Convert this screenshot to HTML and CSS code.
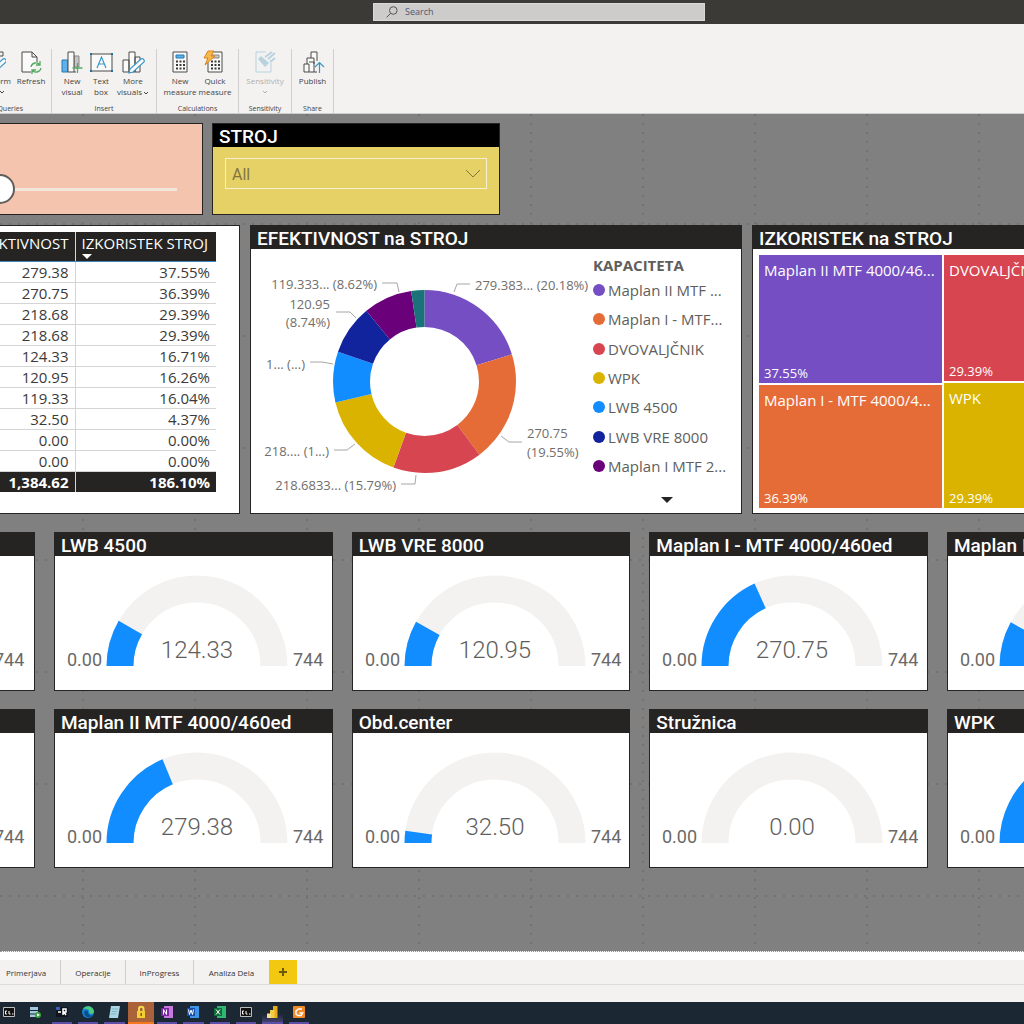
FILE: index.html
```html
<!DOCTYPE html>
<html lang="sl">
<head>
<meta charset="utf-8">
<meta name="viewport" content="width=device-width, initial-scale=1">
<title>Efektivnost strojev</title>
<link rel="stylesheet" href="styles.css">
</head>
<body>
<header class="titlebar">
  <label class="search">
    <svg class="search-icon" viewBox="0 0 12 12" aria-hidden="true"><circle cx="7.3" cy="4.5" r="3.8"/><path d="M4.6 7.3 .6 11.4"/></svg>
    <input type="search" placeholder="Search" aria-label="Search">
  </label>
</header>

<nav class="ribbon" aria-label="Ribbon">
  <section class="group group-queries">
    <div class="tools">
      <button class="tool tool-transform" type="button">
        <svg class="icon" viewBox="0 0 24 24" aria-hidden="true"><path class="ink" d="M1 2h20v4M1 6h20M1 2v18h12M1 12h8"/><path class="blue-line paper" d="M21 9 10 19l-1 4 4-1L24 12c1-2-1-4-3-3z"/></svg>
        <span>Transform</span><svg class="caret" viewBox="0 0 6 4" aria-hidden="true"><path d="m1 1 2 2 2-2"/></svg>
      </button>
      <button class="tool tool-refresh" type="button">
        <svg class="icon" viewBox="0 0 24 24" aria-hidden="true"><path class="ink paper" d="M12 22H3V2h10l5 5v5M13 2v5h5"/><path class="green-line" d="M12 17a5 5 0 0 1 9-2M21 11v4h-4M22 18a5 5 0 0 1-9 2M13 24v-4h4"/></svg>
        <span>Refresh</span>
      </button>
    </div>
    <h2 class="group-name">Queries</h2>
  </section>
  <section class="group group-insert">
    <div class="tools">
      <button class="tool" type="button">
        <svg class="icon" viewBox="0 0 24 24" aria-hidden="true"><path class="blue-fill" d="M2 10h6v12H2z"/><path class="grey-fill" d="M14 6h5v11h-5z"/><path class="ink paper" d="M8 2h6v20H8z"/><path class="ink" d="M14 22h2"/><path class="green-line" d="M17.500 13v10M12.500 18h10"/></svg>
        <span>New<br>visual</span>
      </button>
      <button class="tool" type="button">
        <svg class="icon" viewBox="0 0 24 24" aria-hidden="true"><path class="ink paper" d="M2 4h21v17H2z"/><path class="blue-line" d="m8 18 4.500-11L17 18M9.500 14h6"/><path class="corner" d="M1 3h2v2H1zM22 3h2v2h-2zM1 20h2v2H1zM22 20h2v2h-2z"/></svg>
        <span>Text<br>box</span>
      </button>
      <button class="tool tool-wide" type="button">
        <svg class="icon" viewBox="0 0 24 24" aria-hidden="true"><path class="ink paper" d="M2 10h6v12H2zM8 2h6v20H8zM14 7h5v15h-5z"/><path class="blue-line paper" d="M20 9 9 19l-1 4 4-1L23 12c1-2-1-4-3-3z"/></svg>
        <span>More<br>visuals<svg class="caret-inline" viewBox="0 0 6 4" aria-hidden="true"><path d="m1 1 2 2 2-2"/></svg></span>
      </button>
    </div>
    <h2 class="group-name">Insert</h2>
  </section>
  <section class="group group-calc">
    <div class="tools">
      <button class="tool tool-wide" type="button">
        <svg class="icon" viewBox="0 0 24 24" aria-hidden="true"><path class="ink paper" d="M5 2h14v20H5z"/><path class="blue-fill" d="M8 5h8v3H8z"/><path class="keys" d="M8 11.500h9M8 15h9M8 18.500h9"/></svg>
        <span>New<br>measure</span>
      </button>
      <button class="tool tool-wide" type="button">
        <svg class="icon" viewBox="0 0 24 24" aria-hidden="true"><path class="ink paper" d="M5 2h14v20H5z"/><path class="grey-fill" d="M9 5h7v3H9z"/><path class="keys" d="M8 11.500h9M8 15h9M8 18.500h9"/><path class="bolt" d="M5 1h6L8 6h4L2 15l3-7H1z"/></svg>
        <span>Quick<br>measure</span>
      </button>
    </div>
    <h2 class="group-name">Calculations</h2>
  </section>
  <section class="group group-sens">
    <div class="tools">
      <button class="tool tool-sens" type="button" disabled>
        <svg class="icon" viewBox="0 0 24 24" aria-hidden="true"><path class="pale" d="M13 2H3v20h15v-9"/><path class="pale-fill" d="m5 9 3-3 8 7-4 4z"/><path class="pale thick" d="m12 7 7-5M15 9l7-6M17 12l5-4"/></svg>
        <span>Sensitivity</span><svg class="caret" viewBox="0 0 6 4" aria-hidden="true"><path d="m1 1 2 2 2-2"/></svg>
      </button>
    </div>
    <h2 class="group-name">Sensitivity</h2>
  </section>
  <section class="group group-share">
    <div class="tools">
      <button class="tool tool-wide" type="button">
        <svg class="icon" viewBox="0 0 24 24" aria-hidden="true"><path class="ink paper" d="M10 8V2h6v9M6 14V8h7v6M3 14h5v8H3zM8 12h5v10H8"/><path class="ink" d="M13 22h3"/><path class="blue-line" d="M18.500 23V13M14 17l4.500-4.500L23 17"/></svg>
        <span>Publish</span>
      </button>
    </div>
    <h2 class="group-name">Share</h2>
  </section>
</nav>

<main class="canvas">
  <div class="row row-filters">
    <section class="card slider-card">
      <input class="range" type="range" min="0" max="1000" value="477" aria-label="Obdobje">
    </section>
    <section class="card filter-card">
      <h2 class="card-title"><label for="stroj">STROJ</label></h2>
      <div class="select-wrap">
        <select id="stroj"><option>All</option></select>
        <svg class="select-caret" viewBox="0 0 16 10" aria-hidden="true"><path d="m1 1 7 7 7-7"/></svg>
      </div>
    </section>
  </div>

  <div class="row row-charts">
    <section class="card table-card">
      <table>
        <thead><tr><th scope="col">EFEKTIVNOST</th><th scope="col" class="sorted">IZKORISTEK STROJ</th></tr></thead>
        <tbody>
          <tr><td>279.38</td><td>37.55%</td></tr>
          <tr><td>270.75</td><td>36.39%</td></tr>
          <tr><td>218.68</td><td>29.39%</td></tr>
          <tr><td>218.68</td><td>29.39%</td></tr>
          <tr><td>124.33</td><td>16.71%</td></tr>
          <tr><td>120.95</td><td>16.26%</td></tr>
          <tr><td>119.33</td><td>16.04%</td></tr>
          <tr><td>32.50</td><td>4.37%</td></tr>
          <tr><td>0.00</td><td>0.00%</td></tr>
          <tr><td>0.00</td><td>0.00%</td></tr>
        </tbody>
        <tfoot><tr><td>1,384.62</td><td>186.10%</td></tr></tfoot>
      </table>
    </section>

    <section class="card">
      <h2 class="card-title">EFEKTIVNOST na STROJ</h2>
      <div class="donut-body">
        <svg class="donut" viewBox="0 0 342 264" role="img" aria-label="EFEKTIVNOST na STROJ">
          <g class="ring" transform="rotate(-90 173.500 132.500)">
            <circle class="s1" cx="173.500" cy="132.500" r="73" pathLength="1384.6" stroke-dasharray="279.38 1384.6"/>
            <circle class="s2" cx="173.500" cy="132.500" r="73" pathLength="1384.6" stroke-dasharray="270.75 1384.6" stroke-dashoffset="-279.38"/>
            <circle class="s3" cx="173.500" cy="132.500" r="73" pathLength="1384.6" stroke-dasharray="218.68 1384.6" stroke-dashoffset="-550.13"/>
            <circle class="s4" cx="173.500" cy="132.500" r="73" pathLength="1384.6" stroke-dasharray="218.68 1384.6" stroke-dashoffset="-768.81"/>
            <circle class="s5" cx="173.500" cy="132.500" r="73" pathLength="1384.6" stroke-dasharray="124.33 1384.6" stroke-dashoffset="-987.49"/>
            <circle class="s6" cx="173.500" cy="132.500" r="73" pathLength="1384.6" stroke-dasharray="120.95 1384.6" stroke-dashoffset="-1111.82"/>
            <circle class="s7" cx="173.500" cy="132.500" r="73" pathLength="1384.6" stroke-dasharray="119.33 1384.6" stroke-dashoffset="-1232.77"/>
            <circle class="s8" cx="173.500" cy="132.500" r="73" pathLength="1384.6" stroke-dasharray="32.5 1384.6" stroke-dashoffset="-1352.1"/>
          </g>
          <path class="leader" d="M131 34h15l2 9M85 63h14l6 6M59 113h12l11 2M83 201h13l8-6M150 235h14l1-9M203 43l3-8h13M250 187l8 6h13"/>
          <g class="note">
            <text x="224" y="41">279.383... (20.18%)</text>
            <text x="276" y="189">270.75</text><text x="276" y="208">(19.55%)</text>
            <g text-anchor="end">
              <text x="126" y="40">119.333... (8.62%)</text>
              <text x="79" y="60">120.95</text><text x="79" y="78">(8.74%)</text>
              <text x="54" y="120">1... (...)</text>
              <text x="78" y="207">218.... (1...)</text>
              <text x="145" y="241">218.6833... (15.79%)</text>
            </g>
          </g>
        </svg>
        <div class="legend">
          <h3>KAPACITETA</h3>
          <ul>
            <li class="c1">Maplan II MTF ...</li>
            <li class="c2">Maplan I - MTF...</li>
            <li class="c3">DVOVALJČNIK</li>
            <li class="c4">WPK</li>
            <li class="c5">LWB 4500</li>
            <li class="c6">LWB VRE 8000</li>
            <li class="c7">Maplan I MTF 2...</li>
          </ul>
          <button class="legend-more" type="button" aria-label="More"></button>
        </div>
      </div>
    </section>

    <section class="card cut-right">
      <h2 class="card-title">IZKORISTEK na STROJ</h2>
      <div class="treemap">
        <div class="tree-col">
          <div class="tile t1"><span>Maplan II MTF 4000/46...</span><b>37.55%</b></div>
          <div class="tile t2"><span>Maplan I - MTF 4000/4...</span><b>36.39%</b></div>
        </div>
        <div class="tree-col">
          <div class="tile t3"><span>DVOVALJČNIK</span><b>29.39%</b></div>
          <div class="tile t4"><span>WPK</span><b>29.39%</b></div>
        </div>
      </div>
    </section>
  </div>

  <div class="row row-gauges">
    <section class="card cut-left"><h2 class="card-title">&nbsp;</h2>
      <svg class="gauge" viewBox="0 0 276 134"><path class="track" d="M65 110a77 77 0 0 1 154 0"/><text class="limit" x="236" y="110">744</text></svg></section>
    <section class="card"><h2 class="card-title">LWB 4500</h2>
      <svg class="gauge" viewBox="0 0 276 134"><path class="track" d="M65 110a77 77 0 0 1 154 0"/><path class="fill" pathLength="744" stroke-dasharray="124.33 1488" d="M65 110a77 77 0 0 1 154 0"/><text class="limit" x="12" y="110">0.00</text><text class="value" x="142" y="102">124.33</text><text class="limit" x="238" y="110">744</text></svg></section>
    <section class="card"><h2 class="card-title">LWB VRE 8000</h2>
      <svg class="gauge" viewBox="0 0 276 134"><path class="track" d="M65 110a77 77 0 0 1 154 0"/><path class="fill" pathLength="744" stroke-dasharray="120.95 1488" d="M65 110a77 77 0 0 1 154 0"/><text class="limit" x="12" y="110">0.00</text><text class="value" x="142" y="102">120.95</text><text class="limit" x="238" y="110">744</text></svg></section>
    <section class="card"><h2 class="card-title">Maplan I - MTF 4000/460ed</h2>
      <svg class="gauge" viewBox="0 0 276 134"><path class="track" d="M65 110a77 77 0 0 1 154 0"/><path class="fill" pathLength="744" stroke-dasharray="270.75 1488" d="M65 110a77 77 0 0 1 154 0"/><text class="limit" x="12" y="110">0.00</text><text class="value" x="142" y="102">270.75</text><text class="limit" x="238" y="110">744</text></svg></section>
    <section class="card cut-right"><h2 class="card-title">Maplan I MTF 2000</h2>
      <svg class="gauge" viewBox="0 0 276 134"><path class="track" d="M65 110a77 77 0 0 1 154 0"/><path class="fill" pathLength="744" stroke-dasharray="119.33 1488" d="M65 110a77 77 0 0 1 154 0"/><text class="limit" x="12" y="110">0.00</text></svg></section>
  </div>

  <div class="row row-gauges">
    <section class="card cut-left"><h2 class="card-title">&nbsp;</h2>
      <svg class="gauge" viewBox="0 0 276 134"><path class="track" d="M65 110a77 77 0 0 1 154 0"/><text class="limit" x="236" y="110">744</text></svg></section>
    <section class="card"><h2 class="card-title">Maplan II MTF 4000/460ed</h2>
      <svg class="gauge" viewBox="0 0 276 134"><path class="track" d="M65 110a77 77 0 0 1 154 0"/><path class="fill" pathLength="744" stroke-dasharray="279.38 1488" d="M65 110a77 77 0 0 1 154 0"/><text class="limit" x="12" y="110">0.00</text><text class="value" x="142" y="102">279.38</text><text class="limit" x="238" y="110">744</text></svg></section>
    <section class="card"><h2 class="card-title">Obd.center</h2>
      <svg class="gauge" viewBox="0 0 276 134"><path class="track" d="M65 110a77 77 0 0 1 154 0"/><path class="fill" pathLength="744" stroke-dasharray="32.5 1488" d="M65 110a77 77 0 0 1 154 0"/><text class="limit" x="12" y="110">0.00</text><text class="value" x="142" y="102">32.50</text><text class="limit" x="238" y="110">744</text></svg></section>
    <section class="card"><h2 class="card-title">Stružnica</h2>
      <svg class="gauge" viewBox="0 0 276 134"><path class="track" d="M65 110a77 77 0 0 1 154 0"/><text class="limit" x="12" y="110">0.00</text><text class="value" x="142" y="102">0.00</text><text class="limit" x="238" y="110">744</text></svg></section>
    <section class="card cut-right"><h2 class="card-title">WPK</h2>
      <svg class="gauge" viewBox="0 0 276 134"><path class="track" d="M65 110a77 77 0 0 1 154 0"/><path class="fill" pathLength="744" stroke-dasharray="218.68 1488" d="M65 110a77 77 0 0 1 154 0"/><text class="limit" x="12" y="110">0.00</text></svg></section>
  </div>
</main>

<nav class="pages" aria-label="Pages">
  <button class="page page-first" type="button">Primerjava</button>
  <button class="page" type="button">Operacije</button>
  <button class="page page-mid" type="button">InProgress</button>
  <button class="page page-last" type="button">Analiza Dela</button>
  <button class="page-add" type="button" aria-label="New page"><svg viewBox="0 0 10 10" aria-hidden="true"><path d="M5 1v8M1 5h8"/></svg></button>
</nav>
<div class="status"></div>

<footer class="taskbar">
  <div class="apps">
    <button class="app" type="button" aria-label="Command Prompt"><svg viewBox="0 0 14 14" aria-hidden="true"><path fill="#111" stroke="#bbb" d="M1.500 2.500h11v9h-11z"/><path class="glyph" d="M5 6H3.500v3H5M7 6v3h1.500M10 9h1.500"/></svg></button>
    <button class="app" type="button" aria-label="SQL Server"><svg viewBox="0 0 14 14" aria-hidden="true"><path fill="#9fc9dc" d="M2 2h8v3H2zM2 6h8v2.500H2zM2 9.500h6V12H2z"/><circle cx="10" cy="10" r="3" fill="#3f9e3d"/><path fill="#fff" d="m9 8.500 3 1.500-3 1.500z"/></svg></button>
    <button class="app open" type="button" aria-label="Remote"><svg viewBox="0 0 14 14" aria-hidden="true"><path fill="#10141f" d="M1 2h12v10H1z"/><path fill="none" stroke="#fff" stroke-width="1.500" d="M3 7h3M8 10V4h3v3H8m1 0 2 3"/><path fill="#3a5fb5" d="M1 2h4v3H1z"/></svg></button>
    <button class="app open" type="button" aria-label="Edge"><svg viewBox="0 0 14 14" aria-hidden="true"><circle cx="7" cy="7" r="6" fill="#1687d2"/><path fill="#4ccb7b" d="M2 4c3-5 11-3 11 3-1 3-5 2-5 0 1-3-3-4-6-3z"/><path fill="#0b4e94" d="M3 7c1-2 4-2 4 0 0 3 3 4 5 3-2 4-9 3-9-3z"/></svg></button>
    <button class="app open" type="button" aria-label="Notepad"><svg viewBox="0 0 14 14" aria-hidden="true"><path fill="#a9d6e2" d="M4 1h9l-2 12H2z"/><path fill="none" stroke="#7fb3c4" d="M5 4h6M5 6.500h5M4 9h5"/></svg></button>
    <button class="app active" type="button" aria-label="KeePass"><svg viewBox="0 0 14 14" aria-hidden="true"><path fill="none" stroke="#f3dc53" stroke-width="2" d="M5 6V4a2.200 2.200 0 0 1 4.500 0v2"/><path fill="#f2cf32" d="M3 6h8v7H3z"/><path fill="#8a5a10" d="M6.500 8h1.500v3H6.500z"/></svg></button>
    <button class="app open" type="button" aria-label="OneNote"><svg viewBox="0 0 14 14" aria-hidden="true"><path fill="#c978e0" d="M4 1h9v12H4z"/><path fill="#7c27a3" d="M1 3h8v8H1z"/><path class="glyph" d="M3.500 9.500v-5l3 5v-5"/></svg></button>
    <button class="app open" type="button" aria-label="Word"><svg viewBox="0 0 14 14" aria-hidden="true"><path fill="#3d93e6" d="M4 1h9v12H4z"/><path fill="#174fa8" d="M1 3h8v8H1z"/><path class="glyph" d="m2.500 4.500 1 5L5 5l1.500 4.500 1-5"/></svg></button>
    <button class="app open" type="button" aria-label="Excel"><svg viewBox="0 0 14 14" aria-hidden="true"><path fill="#2fb673" d="M4 1h9v12H4z"/><path fill="#0f6b39" d="M1 3h8v8H1z"/><path class="glyph" d="m3 4.500 4 5m0-5-4 5"/></svg></button>
    <button class="app open" type="button" aria-label="Command Prompt"><svg viewBox="0 0 14 14" aria-hidden="true"><path fill="#111" stroke="#bbb" d="M1.500 2.500h11v9h-11z"/><path class="glyph" d="M5 6H3.500v3H5M7 6v3h1.500M10 9h1.500"/></svg></button>
    <button class="app open current" type="button" aria-label="Power BI"><svg viewBox="0 0 14 14" aria-hidden="true"><path fill="#e7ad18" d="M8 1h4.500v12H8z"/><path fill="#f4cb45" d="M5 5h4.500v8H5z"/><path fill="#f9e08a" d="M2 8.500h4V13H2z"/></svg></button>
    <button class="app open" type="button" aria-label="Snagit"><svg viewBox="0 0 14 14" aria-hidden="true"><rect x="1" y="1" width="12" height="12" rx="1" fill="#f08a28"/><path fill="none" stroke="#fff" stroke-width="1.500" d="M10 4H6.500L4 6v3l2 1.500h3L10.500 8H7.500"/></svg></button>
  </div>
</footer>
</body>
</html>
```

FILE: styles.css
```css
:root {
  --ui: "Open Sans", "Noto Sans", sans-serif;
  --din: Roboto, "Liberation Sans", sans-serif;
  --dark: #252423;
  --c1: #744ec2;
  --c2: #e66c37;
  --c3: #d64550;
  --c4: #d9b300;
  --c5: #118dff;
  --c6: #12239e;
  --c7: #6b007b;
  --c8: #1a7378;
}

* { box-sizing: border-box; }

body {
  margin: 0;
  min-height: 100vh;
  display: flex;
  flex-direction: column;
  font-family: var(--ui);
  overflow-x: hidden;
}

h2, h3, ul { margin: 0; padding: 0; }
button, input, select { font: inherit; color: inherit; }
button { padding: 0; border: 0; background: none; }

/* Title bar */
.titlebar {
  height: 24px;
  padding: 3px 319px 3px 373px;
  background: #3b3a36;
  display: flex;
}
.search {
  flex: 1;
  display: flex;
  align-items: center;
  gap: 7px;
  padding-left: 12px;
  background: #cdccca;
  border: 1px solid #dad9d7;
}
.search-icon { width: 12px; height: 12px; fill: none; stroke: #555; }
.search input {
  flex: 1;
  min-width: 0;
  padding: 0;
  border: 0;
  background: none;
  font-size: 9px;
  line-height: 12px;
  outline: 0;
}
.search input::placeholder { color: #4c5875; opacity: 1; }

/* Ribbon */
.ribbon {
  height: 90px;
  padding-top: 25px;
  background: #f3f2f1;
  border-bottom: 1px solid #cfcecd;
  display: flex;
  color: #444;
}
.group {
  height: 64px;
  border-right: 1px solid #d2d0ce;
  display: flex;
  flex-direction: column;
  justify-content: space-between;
}
.group-queries { width: 52px; align-items: flex-end; }
.group-insert { width: 105px; }
.group-calc { width: 82px; }
.group-sens { width: 53px; }
.group-share { width: 42px; }
.tools { display: flex; justify-content: center; }
.tool {
  width: 29px;
  flex: none;
  display: flex;
  flex-direction: column;
  align-items: center;
  font-size: 8px;
  line-height: 11px;
  white-space: nowrap;
}
.tool-wide { width: 35px; }
.tool-transform { width: 38px; align-items: flex-end; }
.tool-transform .icon { margin-right: 5px; }
.tool-transform .caret { margin-right: 6px; }
.tool-refresh { width: 40px; }
.tool-sens { width: 50px; color: #b1afad; }
.icon { width: 24px; height: 24px; margin: 1px 0; fill: none; }
.ink { stroke: #4b4a49; }
.paper { fill: #fafafa; }
.blue-line { stroke: #3a96c8; stroke-width: 1.2; }
.green-line { stroke: #55a962; stroke-width: 1.3; }
.blue-fill { fill: #5db2ee; stroke: #2778ad; }
.grey-fill { fill: #c8c6c4; stroke: #8a8886; }
.corner { fill: #1f6fa3; }
.keys { stroke: #3b3a39; stroke-width: 2; stroke-dasharray: 2 1.5; }
.bolt { fill: #f7b94a; stroke: #d9831f; }
.pale { stroke: #b8d2e0; }
.pale-fill { fill: #b8d2e0; }
.thick { stroke-width: 2; }
.caret { width: 6px; height: 4px; margin-top: 4px; fill: none; stroke: currentColor; }
.caret-inline { width: 6px; height: 4px; margin-left: 1px; fill: none; stroke: currentColor; }
.group-name {
  font-size: 7px;
  line-height: 9px;
  font-weight: 400;
  text-align: center;
}
.group-queries .tools { justify-content: flex-end; }
.group-queries .group-name { padding-right: 28px; }

/* Report canvas */
.canvas {
  flex: 1;
  padding: 9px 0 83px;
  display: flex;
  flex-direction: column;
  gap: 18px;
  background-color: #808080;
  background-image:
    radial-gradient(circle at 1px 1px, #727272 1px, transparent 1px),
    radial-gradient(circle at 1px 1px, #727272 1px, transparent 1px);
  background-size: 112px 9px, 9px 112px;
  background-position: 82px 0, 0 109px;
}
.row { display: grid; }
.row-filters {
  height: 92px;
  margin-bottom: -8px;
  grid-template-columns: 203px 288px;
  gap: 9px;
}
.row-charts {
  height: 289px;
  grid-template-columns: 240px minmax(0, 1fr) 272px;
  gap: 10px;
}
.row-gauges {
  height: 159px;
  grid-template-columns: 35px repeat(3, minmax(0, 1fr)) 77px;
  gap: 19px;
}
.card {
  min-width: 0;
  overflow: hidden;
  background: #fff;
  border: 1px solid var(--dark);
  display: flex;
  flex-direction: column;
}
.card-title {
  flex: none;
  height: 23px;
  padding-left: 6px;
  background: var(--dark);
  color: #fff;
  font: 500 19px/25px var(--din);
  white-space: nowrap;
}
.cut-left { border-left: 0; align-items: flex-end; }
.cut-left .card-title { width: 100%; }
.cut-right { border-right: 0; }

/* Filters */
.slider-card {
  flex-direction: row;
  justify-content: flex-end;
  align-items: flex-end;
  padding: 0 25px 10px 0;
  background: #f4c4ae;
  border-left: 0;
}
.range {
  flex: none;
  width: 340px;
  height: 30px;
  margin: 0;
  appearance: none;
  background: none;
}
.range::-webkit-slider-runnable-track { height: 3px; background: #f1e6da; }
.range::-webkit-slider-thumb {
  appearance: none;
  width: 30px;
  height: 30px;
  margin-top: -14px;
  background: #fff;
  border: 2px solid #605e5c;
  border-radius: 50%;
}
.filter-card { background: #e6d167; }
.filter-card .card-title { background: #000; }
.select-wrap { position: relative; margin: 11px 12px; height: 31px; }
.select-wrap select {
  width: 100%;
  height: 100%;
  padding: 2px 6px 0;
  appearance: none;
  border: 1px solid #f8efcf;
  border-radius: 0;
  background: none;
  color: #83763f;
  font: 400 16px/20px var(--din);
}
.select-caret {
  position: absolute;
  right: 6px;
  top: 11px;
  width: 16px;
  height: 10px;
  fill: none;
  stroke: #83763f;
  pointer-events: none;
}

/* Table */
.table-card {
  flex-direction: row;
  justify-content: flex-end;
  align-items: flex-start;
  padding: 6px 23px 0 0;
  border-left: 0;
}
table {
  flex: none;
  width: 260px;
  table-layout: fixed;
  border-collapse: collapse;
  font-size: 15px;
  line-height: 20px;
  color: #3b3a39;
  text-align: right;
}
th, td { height: 21px; padding: 0 6px; border-bottom: 1px solid #d5d5d5; white-space: nowrap; }
th:first-child, td:first-child { width: 119px; border-right: 1px solid #d5d5d5; }
th {
  height: 29px;
  padding-bottom: 7px;
  background: var(--dark);
  border-bottom-color: #3d87c0;
  color: #fff;
  font-size: 15px;
  font-weight: 400;
  position: relative;
}
.sorted { text-align: left; }
.sorted::after {
  content: "";
  position: absolute;
  left: 6px;
  bottom: 2px;
  border: 5px solid transparent;
  border-top-color: #fff;
  border-bottom: 0;
}
tfoot td { background: var(--dark); color: #fff; font-weight: 700; border-top: 1px solid #118dff; border-bottom: 0; }

/* Donut */
.donut-body { flex: 1; display: flex; justify-content: space-between; }
.donut { width: 342px; height: 264px; flex: none; overflow: visible; }
.ring circle { fill: none; stroke-width: 37; }
.s1 { stroke: var(--c1); }
.s2 { stroke: var(--c2); }
.s3 { stroke: var(--c3); }
.s4 { stroke: var(--c4); }
.s5 { stroke: var(--c5); }
.s6 { stroke: var(--c6); }
.s7 { stroke: var(--c7); }
.s8 { stroke: var(--c8); }
.leader { fill: none; stroke: #a6a6a6; }
.note { fill: #706e6c; font-size: 13px; }
.legend { width: 149px; color: #605e5c; font-size: 15px; display: flex; flex-direction: column; }
.legend h3 { margin-top: 6px; font-size: 15px; line-height: 20px; }
.legend ul { height: 206px; list-style: none; display: grid; grid-auto-rows: 1fr; }
.legend li { display: flex; align-items: center; gap: 3px; white-space: nowrap; }
.legend li::before {
  content: "";
  width: 12px;
  height: 12px;
  border-radius: 50%;
  background: var(--dot);
}
.c1 { --dot: var(--c1); }
.c2 { --dot: var(--c2); }
.c3 { --dot: var(--c3); }
.c4 { --dot: var(--c4); }
.c5 { --dot: var(--c5); }
.c6 { --dot: var(--c6); }
.c7 { --dot: var(--c7); }
.legend-more {
  align-self: center;
  margin-top: 16px;
  border: 6px solid transparent;
  border-top-color: var(--dark);
  border-bottom: 0;
}

/* Treemap */
.treemap {
  flex: 1;
  padding: 6px 0 5px 6px;
  display: grid;
  grid-template-columns: 183px minmax(0, 1fr);
  gap: 2px;
}
.tree-col { min-height: 0; display: grid; grid-template-rows: 128px 1fr; gap: 2px; }
.tree-col + .tree-col { grid-template-rows: 126px 1fr; }
.tile {
  overflow: hidden;
  padding: 5px 5px 0;
  color: #fff;
  font-size: 15px;
  line-height: 20px;
  white-space: nowrap;
  display: flex;
  flex-direction: column;
  justify-content: space-between;
}
.tile b { font-size: 13px; font-weight: 400; }
.t1 { background: var(--c1); }
.t2 { background: var(--c2); }
.t3 { background: var(--c3); }
.t4 { background: var(--c4); }

/* Gauges */
.gauge { flex: none; width: 276px; height: 134px; }
.track, .fill { fill: none; stroke-width: 27; }
.track { stroke: #f3f2f1; }
.fill { stroke: #118dff; }
.limit { fill: #6b6967; font: 400 18px var(--din); }
.value { fill: #605e5c; font: 300 24px var(--din); text-anchor: middle; }

/* Page tabs */
.pages {
  height: 34px;
  padding-top: 8px;
  background: linear-gradient(#fff 8px, #f3f2f1 8px);
  border-top: 1px dotted #999;
  border-bottom: 1px solid #dddbd9;
  display: flex;
  color: #333;
}
.page {
  width: 65px;
  border-right: 1px solid #d0cecc;
  font-size: 8px;
}
.page-first { width: 61px; padding-right: 8px; }
.page-mid { width: 68px; }
.page-last { width: 75px; border: 0; }
.page-add {
  width: 28px;
  background: #f2c811;
  display: flex;
  align-items: center;
  justify-content: center;
}
.page-add svg { width: 10px; height: 10px; stroke: #6b5a10; stroke-width: 2; }
.status { height: 17px; background: #f3f2f1; }

/* Taskbar */
.taskbar { height: 22px; background: #1b2733; overflow: hidden; }
.apps {
  width: 316px;
  height: 22px;
  margin-left: -4px;
  display: grid;
  grid-template-columns: repeat(12, 1fr);
}
.app {
  margin: 0 3px;
  border-bottom: 2px solid transparent;
  display: flex;
  align-items: center;
  justify-content: center;
}
.app svg { width: 14px; height: 14px; }
.glyph { fill: none; stroke: #fff; }
.open { border-bottom-color: #5d4fa8; }
.current { background: linear-gradient(#1b2733 60%, #45406e); }
.active { margin: 0; background: #a9623a; border-bottom-color: #f5781e; }
```
